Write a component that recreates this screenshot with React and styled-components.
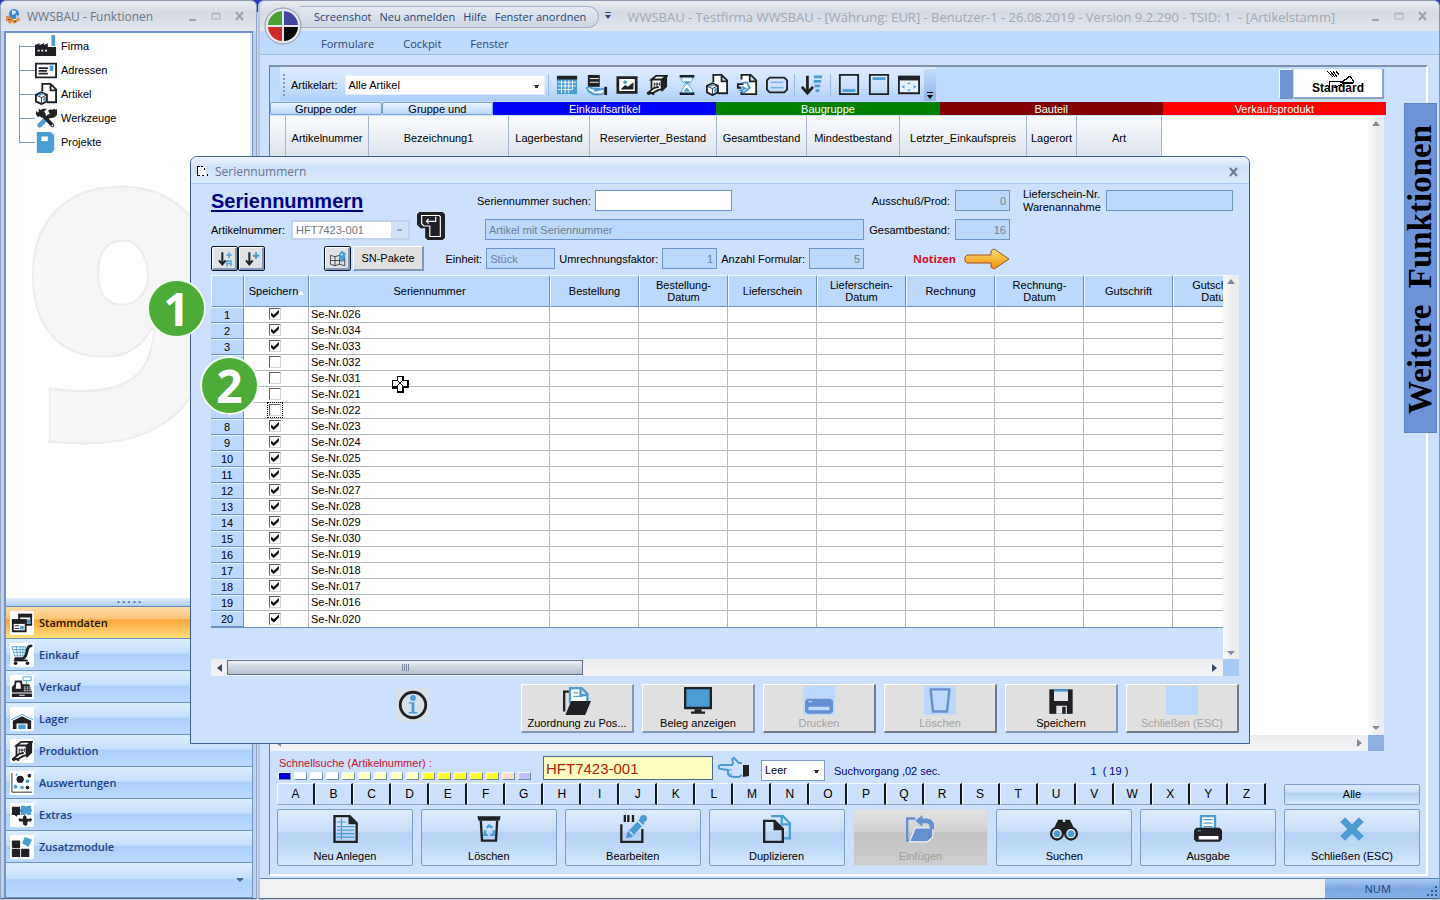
import React from 'react'
import styled, { createGlobalStyle, css } from 'styled-components'

const K = '#1f2124'
const B = '#4b9cd3'
const D = '#6490d0'
const ui = '"Liberation Sans", Arial, sans-serif'
const segoe = '"Open Sans", "Noto Sans", sans-serif'

const GlobalStyle = createGlobalStyle`
    * { box-sizing:border-box; }
    body {
        margin:0;
        background:#cfd3da;
        font-family:${ui};
        font-size:11px;
        line-height:16px;
        color:#000;
        overflow:hidden;
    }
    button, input, select { font:inherit; color:inherit; margin:0; }
    svg { display:block; flex:none; }
`

const shapes = {
    factory: <><path fill={K} d="M0 23V11l5-2v2l5-2v2l4-2v4h9v10z" /><path fill="#fff" d="M3 16h2v2H3zM7 16h2v2H7zM11 16h2v2h-2z" /><path fill={B} d="M18 0h4v12h-4z" /></>,
    card: <><path fill="#fff" stroke={K} strokeWidth="2" d="M1 5h22v15H1z" /><path stroke={K} strokeWidth="2" d="M4 10h10M4 13h9M4 16h10" /><path fill={B} d="M16 7h4v6h-4z" /></>,
    article: <><path fill="#fff" stroke={K} strokeWidth="2" d="M8 9V1h9l6 6v14H13M17 1v7h6" /><path fill="#fff" stroke={K} strokeWidth="2" d="M1 13l6-3 6 3v7l-6 3-6-3z" /><path stroke={K} strokeWidth="1" d="M1 13l6 3 6-3M7 16v7" /><path fill={B} d="M3 13l5-2 2 1-5 2zM9 16l3-1v4l-3 1z" /></>,
    tools: <><path stroke={B} strokeWidth="5" strokeLinecap="round" d="M5 20l6-6" /><path stroke={K} strokeWidth="4" strokeLinecap="round" d="M6 6l13 14" /><path fill={K} d="M1 8l7-6h5l-3 3 2 3-4 4-3-2-2 1zM1 4l3 3V2l5 3-3 5-5-2z" /><path fill="none" stroke={K} strokeWidth="4" d="M22 3l-4 4-2-4M22 3c2 5-2 8-7 7l-3 3" /><circle cx="19" cy="20" r="1" fill="#fff" /></>,
    project: <><path fill={B} d="M2 1h15l4 4v15l-3 4H2z" /><path fill="#fff" d="M7 6h7v5H7z" /><path stroke={B} d="M19 1l4 4M18 23l5-5" strokeDasharray="1 1" /></>,
    windows: <><path fill="#fff" stroke={K} strokeWidth="2" d="M9 3h13v11H9z" /><path fill={K} d="M8 2h15v4H8z" /><path fill={B} d="M15 8h6v5h-6z" /><path fill="#fff" stroke={K} strokeWidth="2" d="M2 9h14v12H2z" /><path fill={K} d="M1 8h16v5H1z" /><path fill={B} d="M10 15h4v4h-4z" /><path stroke={K} d="M4 15h5M4 18h5" /></>,
    cart: <><path fill="#fff" stroke={B} d="M1 3h15l-1 10H4z" /><path stroke={B} d="M2 6h14M3 9h12M6 3l1 10M10 3v10M13 3v10" /><path fill="none" stroke={K} strokeWidth="3" strokeLinecap="round" d="M22 2c-4 0-4 4-5 8-1 4-2 6-5 6H5" /><path stroke={K} strokeWidth="2" d="M3 18h15" /><circle cx="5" cy="21" r="2" fill={K} /><circle cx="18" cy="21" r="2" fill={K} /></>,
    register: <><path fill={K} d="M1 12l3-3h16l3 9H1zM1 19h22v4H1z" /><path fill="#fff" stroke={K} strokeWidth="2" d="M5 6h6l1 9H4z" /><path fill="#fff" stroke={B} strokeWidth="1" d="M13 1h9v4h-9zM17 5v4" /><path stroke="#fff" strokeWidth="1" d="M14 12h7M14 14h8M14 16h8" strokeDasharray="2 1" /><path stroke="#fff" strokeWidth="1" d="M9 21h6" /></>,
    barn: <><path fill="none" stroke={B} strokeWidth="1" d="M0 13l12-6 12 6" /><path fill={K} d="M2 14l10-5 10 5v9h-4v-6H6v6H2z" /><path fill={B} d="M8 18h8v5H8z" /></>,
    machine: <><path fill="#fff" stroke={K} strokeWidth="2" d="M6 6l5-4h12l-6 4zM6 6h11v11H6z" /><path fill={K} d="M17 6l6-4v12l-6 6z" /><path stroke={K} strokeWidth="1" d="M9 9v5M12 9v5M15 9v4M9 11h6" /><path fill="#fff" stroke={K} strokeWidth="2" d="M14 14l-5 1-6 5 4 1 7-4" /><path stroke={K} strokeWidth="2" d="M3 20v3M8 20v3M1 21h8" /></>,
    scatter: <><path fill="none" stroke={K} strokeWidth="1" d="M1 1v21h22" /><circle cx="10" cy="8" r="4" fill={K} /><circle cx="20" cy="4" r="2" fill={K} /><circle cx="18" cy="17" r="2" fill={K} /><circle cx="5" cy="16" r="2" fill={B} /><circle cx="18" cy="10" r="2" fill={B} /><circle cx="12" cy="17" r="2" fill={B} /><circle cx="6" cy="3" r="1" fill={B} /></>,
    puzzle: <><path fill={K} d="M1 3h9v3l2 2-2 1v3H7l-1 2-2-2H1z" /><path fill={B} d="M11 2h4l2 1 1-1h4v3l1 2-1 2v3h-4l-1-2-2 2h-4V9l-2-1 2-2z" /><path fill={K} d="M13 14l2-2 2 2v2h4v-1l2 2-2 3v-1h-3v3l-2 2-3-2v-3h-3v1l-2-3 2-2v1h3z" /></>,
    modules: <><rect x="1" y="5" width="9" height="8" rx="1" fill={K} /><rect x="1" y="14" width="9" height="9" rx="1" fill={K} /><rect x="11" y="14" width="9" height="9" rx="1" fill={K} /><path fill={B} d="M15 1l8 3-4 8-7-4z" /></>,
    calendar: <><path fill={B} d="M1 2h22v20H1z" /><path fill={K} d="M1 2h22v4H1z" /><path stroke="#fff" d="M2 9h20M2 13h20M2 17h16M6 7v14M10 7v14M14 7v14M18 7v10" /></>,
    serve: <><path fill={K} d="M2 1h13v13H2z" /><path stroke="#fff" d="M4 5h10M4 9h10" /><path fill="#fff" stroke={B} strokeWidth="2" d="M1 15c4-2 6 2 9 1h4c1 2-3 2-5 2 4 1 7-2 11-2v5c-6 2-13 2-18-3z" /><path fill={K} d="M20 14h3v9h-3z" /></>,
    picture: <><path fill="#fff" stroke={K} strokeWidth="3" d="M2 4h20v16H2z" /><path fill={K} d="M5 17l5-5 3 2 6-5v8z" /><circle cx="10" cy="9" r="2" fill={B} /></>,
    hourglass: <><path fill={K} d="M4 1h16v3H4zM4 20h16v3H4z" /><path fill="#fff" stroke={B} strokeWidth="1" d="M6 4h12c0 5-4 6-4 8s4 3 4 8H6c0-5 4-6 4-8s-4-3-4-8z" /><path fill={B} d="M8 8h8l-4 4zM8 19l4-4 4 4z" /></>,
    pageTurn: <><path fill="#fff" stroke={K} strokeWidth="2" d="M6 6V1h10l6 6v15H6v-3M15 1v7h7" /><path fill="none" stroke={B} strokeWidth="2" d="M6 10l6-1 3 6-6 5-4-2 5-2-3-2" /><path fill="none" stroke={K} strokeWidth="2" d="M8 11H2v4h4" /></>,
    label: <><path fill="none" stroke={K} strokeWidth="2" d="M4 4h16l3 3v10l-3 3H4l-3-3V7z" /><path stroke={B} strokeWidth="1" d="M5 9h14M5 15h14" /></>,
    sort: <><path fill="none" stroke={K} strokeWidth="3" d="M7 2v18M1 14l6 7 6-7" /><path stroke={B} strokeWidth="3" d="M14 3h9M14 8h8M15 13h6M16 18h4" /></>,
    pageBottom: <><path fill="none" stroke={K} strokeWidth="2" d="M2 1h20v21H2z" /><path stroke={B} strokeWidth="3" d="M5 18h14" /></>,
    pageTop: <><path fill="none" stroke={K} strokeWidth="2" d="M2 1h20v21H2z" /><path stroke={B} strokeWidth="3" d="M5 5h14" /></>,
    expand: <><path fill="#e6f1ff" stroke={K} strokeWidth="2" d="M1 3h22v18H1z" /><path fill={K} d="M1 2h22v5H1z" /><path fill={B} d="M10 11l2-2 2 2zM10 17l2 2 2-2zM7 12l-3 2 3 2zM17 12l3 2-3 2z" /></>,
    list: <><path fill="none" stroke={K} strokeWidth="2" d="M3 1h13l6 6v16H3z" /><path fill={K} d="M15 1l7 7h-7z" /><path stroke={B} d="M5 6h8M5 10h15M5 13h15M5 16h15M5 19h15M9 3v18" /></>,
    recycle: <><path fill={K} d="M2 1h20l-1 4H3z" /><path fill="none" stroke={K} strokeWidth="2" d="M5 5l1 17h12l1-17" /><path fill="none" stroke={B} strokeWidth="2" d="M10 11l2-2 3 2M9 13l-1 4h3M13 17h3v-4" /></>,
    edit: <><path fill="none" stroke={K} strokeWidth="2" d="M2 8v15h18V12" /><path stroke={K} strokeWidth="2" d="M5 0v6M8 0v6M12 0v6" /><path fill={B} d="M7 15L18 3l4 4-11 12-5 1z" /><circle cx="21" cy="3" r="3" fill={B} /><path stroke="#fff" d="M9 14l3 3M16 5l4 4" /></>,
    copy: <><path fill="none" stroke={B} strokeWidth="2" d="M7 1h10l6 6v13h-5M16 2v6h7" /><path fill="none" stroke={K} strokeWidth="2" d="M1 5h9l7 7v11H1z" /><path fill={K} d="M9 5l8 8H9z" /></>,
    paste: <><path fill="none" stroke={D} strokeWidth="2" d="M8 3H1v19h3" /><path fill={D} stroke="#f4f4f4" strokeWidth="1" d="M8 11h15v8l-5 4H3z" /><path fill="none" stroke={D} strokeWidth="4" d="M13 5h4c4 0 6 3 5 7" /><path fill={D} d="M8 5l6-5v10z" /></>,
    binoculars: <><path fill={K} d="M3 12L7 4h4v2h2V4h4l4 8v4H3z" /><circle cx="6" cy="16" r="5" fill="#fff" stroke={K} strokeWidth="2" /><circle cx="18" cy="16" r="5" fill="#fff" stroke={K} strokeWidth="2" /><circle cx="6" cy="16" r="3" fill={B} /><circle cx="18" cy="16" r="3" fill={B} /></>,
    printer: <><path fill="#fff" stroke={B} strokeWidth="2" d="M6 1h12v11H6z" /><path stroke={B} d="M8 4h8M8 7h8M8 10h8" /><path fill={K} d="M2 11h20l2 2v8l-2 2H2l-2-2v-8z" /><path fill="#fff" d="M4 18h17v3H4z" /><path fill={B} d="M3 13h3v1H3z" /></>,
    cross: <path fill={B} d="M6 2l6 6 6-6 4 4-6 6 6 6-4 4-6-6-6 6-4-4 6-6-6-6z" />,
    folderDoc: <><path fill="#fff" stroke={B} strokeWidth="2" d="M6 14V1h10l5 5v8M15 1v6h6" /><path stroke={B} d="M9 5h4M9 8h8" /><path fill="none" stroke={K} strokeWidth="2" d="M5 4H1v17" /><path fill={K} d="M7 12h17l-5 12H2z" /></>,
    monitor: <><path fill={B} stroke={K} strokeWidth="2" d="M1 1h22v17H1z" /><path fill={K} d="M9 19h6v2h3v2H6v-2h3z" /></>,
    printerOff: <><path fill={D} d="M2 10h20l2 2v9l-2 2H2l-2-2v-9z" /><path fill="#bcd8fd" d="M3 17h18v3H3zM3 12h3v1H3z" /></>,
    binOff: <path fill="none" stroke={D} strokeWidth="2" d="M3 2h18M4 3l2 18h12l2-18" />,
    save: <><path fill={K} d="M2 2h20v21H2z" /><path fill="#e4e6ea" d="M6 3h12v9H6zM8 16h9v7H8z" /><path fill={B} d="M6 2h12v2H6z" /><path fill={K} d="M13 17h3v6h-3z" /></>,
    blank: <path fill="#bcd8fd" d="M0 0h24v24H0z" />,
    info: <><circle cx="12" cy="12" r="9" fill="none" stroke={K} strokeWidth="2" /><circle cx="12" cy="7" r="2" fill={B} /><path fill={B} d="M9 10h4v7h2v1H9v-1h2v-6H9z" /></>,
    sortA: <><path fill="none" stroke={K} strokeWidth="3" d="M8 2v17M3 14l5 6 5-6" /><path fill="none" stroke={B} strokeWidth="2" d="M18 2v9M14 6h8M15 23v-8h6v8M15 19h6" /></>,
    sortPlus: <><path fill="none" stroke={K} strokeWidth="3" d="M8 2v17M3 14l5 6 5-6" /><path stroke={B} strokeWidth="3" d="M18 2v10M13 7h10" /></>,
    map: <><path fill="none" stroke={K} strokeWidth="1" d="M2 7l6 2 6-2 7 2v12l-7-2-6 2-6-2zM8 9v12M14 7v12M2 14h19" /><path fill={B} d="M17 1l5 3-1 7-4 6-4-6 1-7z" /><path fill="#fff" d="M16 5h2v2h-2z" /></>,
    key: <><path fill={K} d="M2 0h20l2 2v20l-2 2H9l-2-2v-8H3l-3-3V2z" /><path fill="none" stroke="#fff" d="M4 3h15l1 1v17h-9v-9H6l-2-2zM16 4v4H8M10 6L8 8l2 2" /></>,
}

const Icon = ({ name, size = 22 }) => (
    <svg width={size} height={size} viewBox="0 0 24 24" fill="none" aria-hidden="true">{shapes[name]}</svg>
)

const tree = [['factory', 'Firma'], ['card', 'Adressen'], ['article', 'Artikel'], ['tools', 'Werkzeuge'], ['project', 'Projekte']]
const nav = [['windows', 'Stammdaten'], ['cart', 'Einkauf'], ['register', 'Verkauf'], ['barn', 'Lager'], ['machine', 'Produktion'], ['scatter', 'Auswertungen'], ['puzzle', 'Extras'], ['modules', 'Zusatzmodule']]
const tools1 = ['calendar', 'serve', 'picture', 'machine', 'hourglass', 'article', 'pageTurn', 'label']
const tools2 = ['pageBottom', 'pageTop', 'expand']
const mainCols = [[16, ''], [83, 'Artikelnummer'], [140, 'Bezeichnung1'], [81, 'Lagerbestand'], [127, 'Reservierter_Bestand'], [90, 'Gesamtbestand'], [93, 'Mindestbestand'], [127, 'Letzter_Einkaufspreis'], [50, 'Lagerort'], [85, 'Art']]
const swatches = ['#0000d8', '#fff', '#fff', '#fff', '#ffffc8', '#ffffc8', '#ffffc8', '#ffffc8', '#ffffc8', '#ffff20', '#ffff20', '#ffff20', '#ffff20', '#ffff20', '#ffdcc8', '#c0c0ff']
const actions = [['list', 'Neu Anlegen'], ['recycle', 'Löschen'], ['edit', 'Bearbeiten'], ['copy', 'Duplizieren'], ['paste', 'Einfügen', true], ['binoculars', 'Suchen'], ['printer', 'Ausgabe'], ['cross', 'Schließen (ESC)']]
const serialCols = [[33, ''], [65, 'Speichern'], [241, 'Seriennummer'], [89, 'Bestellung'], [89, 'Bestellung-\nDatum'], [89, 'Lieferschein'], [89, 'Lieferschein-\nDatum'], [89, 'Rechnung'], [89, 'Rechnung-\nDatum'], [89, 'Gutschrift'], [89, 'Gutschrift-\nDatum']]
const serials = ['026', '034', '033', '032', '031', '021', '022', '023', '024', '025', '035', '027', '028', '029', '030', '019', '018', '017', '016', '020']
const unchecked = ['032', '031', '021', '022']
const dialogActions = [['folderDoc', 'Zuordnung zu Pos...'], ['monitor', 'Beleg anzeigen'], ['printerOff', 'Drucken', true], ['binOff', 'Löschen', true], ['save', 'Speichern'], ['blank', 'Schließen (ESC)', true]]

function WindowControls() {
    return (
        <Controls>
            <ControlButton aria-label="Minimieren"><svg width="12" height="12"><path stroke="#98a3b4" strokeWidth="2" d="M3 10h7" /></svg></ControlButton>
            <ControlButton aria-label="Maximieren"><svg width="12" height="12"><path fill="none" stroke="#a9b2c0" d="M2 3h8v6H2zM2 4h8" /></svg></ControlButton>
            <ControlButton aria-label="Schließen"><svg width="12" height="12"><path stroke="#98a3b4" strokeWidth="2" d="M2 2l7 8M9 2L2 10" /></svg></ControlButton>
        </Controls>
    )
}

function FunctionsWindow() {
    return (
        <SideWindow>
            <TitleBar>
                <svg width="16" height="16" viewBox="0 0 16 16">
                    <circle cx="9" cy="6" r="5" fill="#3f87cd" />
                    <path fill="#d9ecfb" d="M7 2l4 1-1 3-3 1zM11 7l2 1-2 2z" />
                    <path fill="#e0903c" d="M1 8h4v2h3v2h4v2l-3 2-2-2-2 2-3-3H1zM11 11l4-1v2l-3 2z" />
                    <path fill="#7a4a20" d="M3 11h3v1H3zM9 13h2v1H9z" />
                </svg>
                <SideTitle>WWSBAU - Funktionen</SideTitle>
                <WindowControls />
            </TitleBar>
            <SideBody>
                <TreePanel>
                    <Watermark aria-hidden="true">9</Watermark>
                    <Tree>
                        {tree.map(([icon, label]) => (
                            <TreeItem key={label}><Icon name={icon} />{label}</TreeItem>
                        ))}
                    </Tree>
                </TreePanel>
                <Grip>·····</Grip>
                {nav.map(([icon, label], i) => (
                    <NavButton key={label} $active={i === 0}>
                        <NavIcon><Icon name={icon} /></NavIcon>{label}
                    </NavButton>
                ))}
                <NavFooter><Arrow $dir="down" $color="#4a6a9c" /></NavFooter>
            </SideBody>
        </SideWindow>
    )
}

function MainWindow() {
    return (
        <Main>
            <MainTitleBar>
                <QuickMenu>
                    {['Screenshot', 'Neu anmelden', 'Hilfe', 'Fenster anordnen'].map(t => <MenuLink href="#" key={t}>{t}</MenuLink>)}
                </QuickMenu>
                <More aria-label="Mehr"><svg width="8" height="8"><path fill="#2b4a80" d="M1 0h6v1H1zM1 3h6L4 7z" /></svg></More>
                <MainTitle>WWSBAU - Testfirma WWSBAU - [Währung: EUR] - Benutzer-1 - 26.08.2019 - Version 9.2.290 - TSID: 1  - [Artikelstamm]</MainTitle>
                <WindowControls />
                <Orb>
                    <svg width="38" height="38" viewBox="0 0 38 38">
                        <circle cx="19" cy="19" r="18" fill="#e4e7ec" stroke="#8d97a8" />
                        <path fill="#45a035" d="M18 18H4A15 15 0 0 1 18 4z" />
                        <path fill="#44459c" d="M20 18V4a15 15 0 0 1 14 14z" />
                        <path fill="#cc2a2a" d="M18 20v14A15 15 0 0 1 4 20z" />
                        <path fill="#080808" d="M20 20h14a15 15 0 0 1-14 14z" />
                    </svg>
                </Orb>
            </MainTitleBar>
            <MenuBar>
                {['Formulare', 'Cockpit', 'Fenster'].map(t => <MenuLink href="#" key={t}>{t}</MenuLink>)}
            </MenuBar>
            <Panel>
                <ToolRow>
                    <Toolbar>
                        <ToolGrip />
                        <label htmlFor="art">Artikelart:</label>
                        <ArtSelect id="art"><option>Alle Artikel</option></ArtSelect>
                        <Separator $w={7} />
                        {tools1.map(n => <ToolButton key={n} aria-label={n}><Icon name={n} /></ToolButton>)}
                        <Separator $w={5} />
                        <ToolButton aria-label="sort"><Icon name="sort" /></ToolButton>
                        <Separator $w={7} />
                        {tools2.map(n => <ToolButton key={n} aria-label={n}><Icon name={n} /></ToolButton>)}
                        <ToolMore aria-label="Mehr"><svg width="8" height="8"><path fill="#000" d="M1 0h6v1H1zM1 3h6L4 7z" /></svg></ToolMore>
                    </Toolbar>
                    <StandardGroup>
                        <BlueTab aria-label="Ansicht" />
                        <StandardButton>
                            <StandardPen width="30" height="20" viewBox="0 0 30 20" shapeRendering="crispEdges">
                                <path fill="none" stroke="#000" d="M3 0l6 6M6 0l5 6M9 0l4 6M12 0l3 4M5 17v-7h15M20 10l6-5 4 6H18l8-6M10 17l10-5h9" />
                            </StandardPen>
                            Standard
                        </StandardButton>
                    </StandardGroup>
                </ToolRow>
                <Legend>
                    <LegendButton>Gruppe oder</LegendButton>
                    <LegendButton>Gruppe und</LegendButton>
                    <LegendItem $bg="#0000ff">Einkaufsartikel</LegendItem>
                    <LegendItem $bg="#008000">Baugruppe</LegendItem>
                    <LegendItem $bg="#800000">Bauteil</LegendItem>
                    <LegendItem $bg="#ff0000">Verkaufsprodukt</LegendItem>
                </Legend>
                <GridArea>
                    <GridView>
                        <MainTable>
                            <colgroup>{mainCols.map(([w], i) => <Col key={i} $w={w} />)}</colgroup>
                            <thead><tr>{mainCols.map(([, t], i) => <th key={i}>{t}</th>)}</tr></thead>
                        </MainTable>
                    </GridView>
                    <VScroll><Arrow $dir="up" /><Arrow $dir="down" /></VScroll>
                    <HScroll><Arrow $dir="left" /><Arrow $dir="right" /></HScroll>
                    <Corner $bg="#8eade0" />
                </GridArea>
                <Bottom>
                    <SearchRow>
                        <QuickSearch>
                            <label htmlFor="quick">Schnellsuche (Artikelnummer) :</label>
                            <Swatches>{swatches.map((c, i) => <Swatch key={i} $bg={c} aria-label={`Farbe ${i + 1}`} />)}</Swatches>
                        </QuickSearch>
                        <QuickInput id="quick" defaultValue="HFT7423-001" />
                        <svg width="34" height="24" viewBox="0 0 34 24">
                            <path fill="none" stroke={B} strokeWidth="2" strokeLinejoin="round" d="M25 7h-3l-5-5c-2 0-2 1-1 5l-1 2H4c-3 0-3 4 0 4l7 1v4l2 2 4 1h5l3-2" />
                            <path stroke={B} d="M11 14h4M12 18h3" />
                            <path fill={K} d="M26 9h6v11l-6 1z" />
                        </svg>
                        <EmptySelect aria-label="Filter"><option>Leer</option></EmptySelect>
                        <NavyText>Suchvorgang ,02 sec.</NavyText>
                        <Count>1  ( 19 )</Count>
                    </SearchRow>
                    <LetterRow>
                        <Letters>{'ABCDEFGHIJKLMNOPQRSTUVWXYZ'.split('').map(l => <Letter key={l}>{l}</Letter>)}</Letters>
                        <AllButton>Alle</AllButton>
                    </LetterRow>
                    <Actions>
                        {actions.map(([icon, label, off]) => (
                            <ActionButton key={label} disabled={off}><Icon name={icon} size={28} />{label}</ActionButton>
                        ))}
                    </Actions>
                </Bottom>
            </Panel>
            <StatusBar><StatusKeys><Dim>UF</Dim>NUM<Dim>RF</Dim>
                <svg width="10" height="10"><path stroke="#34588f" strokeWidth="2" strokeDasharray="2 2" d="M8 1h2M4 5h6M0 9h10" /></svg>
            </StatusKeys></StatusBar>
            <SideTab>Weitere  Funktionen</SideTab>
        </Main>
    )
}

function SerialDialog() {
    return (
        <Dialog role="dialog" aria-label="Seriennummern">
            <DialogTitle>
                <svg width="14" height="14" viewBox="0 0 14 14" shapeRendering="crispEdges"><path fill="#fff" d="M2 2h8v9H2z" /><path fill="#000" d="M1 1h3v1H2v8h2v1H1zM5 1h2v1H5zM8 3h1v2H8zM6 10h2v1H6zM11 9h1v2h-1z" /></svg>
                <span>Seriennummern</span>
                <ControlButton aria-label="Schließen"><svg width="12" height="12"><path stroke="#6f7c90" strokeWidth="2" d="M2 2l7 8M9 2L2 10" /></svg></ControlButton>
            </DialogTitle>
            <DialogBody>
                <FormRow>
                    <h1>Seriennummern</h1>
                    <MidCell $indent><label htmlFor="search">Seriennummer suchen:</label><Field id="search" $w={137} /></MidCell>
                    <RightCell><label htmlFor="aus">Ausschuß/Prod:</label><Field id="aus" $w={55} disabled $num defaultValue="0" /></RightCell>
                    <FarCell><NoteLabel htmlFor="lief">Lieferschein-Nr.<br />Warenannahme</NoteLabel><Field id="lief" $w={127} disabled /></FarCell>
                </FormRow>
                <FormRow>
                    <LeftCell>
                        <ArticleLabel htmlFor="artnr">Artikelnummer:</ArticleLabel>
                        <Combo id="artnr" disabled><option>HFT7423-001</option></Combo>
                        <KeyButton aria-label="Übernehmen"><Icon name="key" size={28} /></KeyButton>
                    </LeftCell>
                    <MidCell><Field aria-label="Artikeltext" $w={379} disabled defaultValue="Artikel mit Seriennummer" /></MidCell>
                    <RightCell><label htmlFor="ges">Gesamtbestand:</label><Field id="ges" $w={55} disabled $num defaultValue="16" /></RightCell>
                </FormRow>
                <FormRow>
                    <LeftCell>
                        <SmallButton aria-label="Sortieren A"><Icon name="sortA" size={16} /></SmallButton>
                        <SmallButton aria-label="Sortieren"><Icon name="sortPlus" size={16} /></SmallButton>
                        <Spring />
                        <SmallButton aria-label="Karte"><Icon name="map" size={18} /></SmallButton>
                        <PacketButton>SN-Pakete</PacketButton>
                    </LeftCell>
                    <MidCell>
                        <label htmlFor="einh">Einheit:</label><Field id="einh" $w={69} disabled defaultValue="Stück" />
                        <label htmlFor="umr">Umrechnungsfaktor:</label><Field id="umr" $w={55} disabled $num defaultValue="1" />
                        <label htmlFor="anz">Anzahl Formular:</label><Field id="anz" $w={55} disabled $num defaultValue="5" />
                    </MidCell>
                    <RightCell>
                        <Notes>Notizen</Notes>
                        <svg width="46" height="22" viewBox="0 0 46 22">
                            <defs><linearGradient id="gold" x1="0" y1="0" x2="0" y2="1"><stop offset="0" stopColor="#ffe27a" /><stop offset="1" stopColor="#f08c00" /></linearGradient></defs>
                            <path fill="url(#gold)" stroke="#a8501c" d="M3 7h24V3l3-2 15 10-15 10-3-2v-4H3l-2-2V9z" />
                        </svg>
                    </RightCell>
                </FormRow>
                <TableArea>
                    <TableClip>
                        <SerialTable>
                            <colgroup>{serialCols.map(([w], i) => <Col key={i} $w={w} />)}</colgroup>
                            <thead><tr>{serialCols.map(([, t], i) => <th key={i}>{t}{i === 1 && <SortMark />}</th>)}</tr></thead>
                            <tbody>
                                {serials.map((s, i) => (
                                    <tr key={s}>
                                        <th scope="row">{i + 1}</th>
                                        <td><CheckCell><Check type="checkbox" aria-label={`Speichern Se-Nr.${s}`} defaultChecked={!unchecked.includes(s)} $focus={s === '022'} /></CheckCell></td>
                                        <td>Se-Nr.{s}</td>
                                        {serialCols.slice(3).map((c, j) => <td key={j} />)}
                                    </tr>
                                ))}
                            </tbody>
                        </SerialTable>
                    </TableClip>
                    <VScroll><Arrow $dir="up" /><Arrow $dir="down" /></VScroll>
                    <HScroll><Arrow $dir="left" $color="#3c4a66" /><Thumb><ThumbGrip /></Thumb><Spring /><Arrow $dir="right" $color="#3c4a66" /></HScroll>
                    <Corner $bg="#a9caf6" />
                </TableArea>
                <DialogFooter>
                    <InfoButton aria-label="Info"><Icon name="info" size={34} /></InfoButton>
                    {dialogActions.map(([icon, label, off]) => (
                        <DialogButton key={label} disabled={off}><DialogIcon $off={off}><Icon name={icon} size={28} /></DialogIcon>{label}</DialogButton>
                    ))}
                </DialogFooter>
            </DialogBody>
        </Dialog>
    )
}

export default function App() {
    return (
        <>
            <GlobalStyle />
            <Desktop>
                <FunctionsWindow />
                <MainWindow />
                <SerialDialog />
                <Badge $x={147} $y={279}>1</Badge>
                <Badge $x={200} $y={356}>2</Badge>
                <Cursor width="17" height="17" viewBox="0 0 17 17" shapeRendering="crispEdges">
                    <path fill="#000" d="M5 0h7v4h5v8h-5v5H5v-4H0V4h5z" />
                    <path fill="#fff" d="M6 1h4v4h5v5h-5v5H6v-5H1V5h5z" />
                    <path stroke="#000" d="M6 5l5 5M10 5l-5 5" />
                </Cursor>
            </Desktop>
        </>
    )
}

const Desktop = styled.div`
    position:relative;
    display:flex;
    height:100vh;
    padding-bottom:1px;
    background:linear-gradient(#2a35b8, #2a35b8) top / 100% 12px no-repeat, #d3d6db;
`
const windowFrame = css`
    display:flex;
    flex-direction:column;
    border-top:1px solid #8d9ab0;
    border-bottom:1px solid #4a648f;
    border-radius:6px 6px 0 0;
`
const SideWindow = styled.section`
    ${windowFrame}
    width:257px;
    flex:none;
    background:#c3d1e8;
    border-right:1px solid #94a5c2;
    border-left:1px solid #94a5c2;
`
const TitleBar = styled.header`
    display:flex;
    align-items:center;
    height:30px;
    padding:0 4px;
    gap:6px;
    border-radius:6px 6px 0 0;
    background:linear-gradient(#e9ecf1, #d5dae3 40%, #e2e6ed);
    font-family:${segoe};
    color:#6d7684;
    white-space:pre;
`
const SideTitle = styled.span`
    flex:1;
    padding-top:2px;
    font-size:12px;
`
const Controls = styled.div`
    display:flex;
    gap:4px;
    margin-left:auto;
    padding:0 2px;
`
const ControlButton = styled.button`
    display:flex;
    align-items:center;
    justify-content:center;
    width:20px;
    height:20px;
    padding:0;
    border:0;
    background:none;
`
const SideBody = styled.div`
    flex:1;
    display:flex;
    flex-direction:column;
    margin:0 3px 0 3px;
    border:1px solid #6f94cb;
    border-left-width:2px;
    border-top-width:2px;
    background:#b9d6fb;
`
const TreePanel = styled.div`
    position:relative;
    flex:1;
    overflow:hidden;
    background:#fff;
    border-right:2px solid #dfeafa;
`
const Watermark = styled.div`
    position:absolute;
    left:16px;
    top:97px;
    font:800 350px/350px ${segoe};
    color:#f6f6f6;
    -webkit-text-stroke:2px #ededed;
`
const Tree = styled.ul`
    position:relative;
    margin:0;
    padding:1px 0 0 13px;
    list-style:none;
`
const TreeItem = styled.li`
    position:relative;
    display:flex;
    align-items:center;
    gap:4px;
    height:24px;
    padding-left:16px;
    &::before {
        content:'';
        position:absolute;
        left:0;
        top:-12px;
        width:15px;
        height:24px;
        border-left:1px solid #7f9cc0;
        border-bottom:1px solid #7f9cc0;
    }
    &:first-child::before {
        top:11px;
        height:1px;
    }
`
const Grip = styled.div`
    height:9px;
    border-bottom:1px solid #5f86bd;
    background:linear-gradient(#e3effe, #aecbf2);
    text-align:center;
    font-size:16px;
    line-height:8px;
    color:#3c5f99;
`
const NavButton = styled.button`
    display:flex;
    align-items:center;
    gap:5px;
    height:32px;
    padding:0 4px;
    border:0;
    border-bottom:1px solid #6b92c8;
    background:${p => p.$active
        ? 'linear-gradient(#fddcab, #fdc576 38%, #fba53a 42%, #fdb650 60%, #ffe07a)'
        : 'linear-gradient(#deedff, #c5dffe 45%, #acd0fb 50%, #bbdafd)'};
    font:600 11px/16px ${segoe};
    color:${p => p.$active ? '#1c1408' : '#1d4485'};
`
const NavIcon = styled.span`
    padding:1px;
    background:#fff;
`
const NavFooter = styled.div`
    display:flex;
    justify-content:flex-end;
    height:34px;
    padding:15px 8px;
    background:linear-gradient(#deedff, #c5dffe 45%, #acd0fb 50%, #bbdafd);
`
const Arrow = styled.i`
    flex:none;
    width:0;
    height:0;
    border:4px solid transparent;
    ${p => p.$dir === 'up' && css`border-bottom:5px solid ${p.$color || '#8089a0'}; border-top:0;`}
    ${p => p.$dir === 'down' && css`border-top:4px solid ${p.$color || '#8089a0'}; border-bottom:0;`}
    ${p => p.$dir === 'left' && css`border-right:5px solid ${p.$color || '#8089a0'}; border-left:0;`}
    ${p => p.$dir === 'right' && css`border-left:5px solid ${p.$color || '#8089a0'}; border-right:0;`}
`

const Main = styled.main`
    ${windowFrame}
    position:relative;
    flex:1;
    min-width:0;
    margin-left:1px;
    border-left:2px solid #b4c6e2;
    border-right:1px solid #7f97bd;
    background:#cde1fe;
`
const MainTitleBar = styled(TitleBar)`
    position:relative;
    gap:0;
    padding-left:40px;
`
const QuickMenu = styled.nav`
    display:flex;
    align-items:center;
    gap:8px;
    height:22px;
    margin-top:2px;
    padding:0 12px 0 14px;
    border:1px solid #a9b4c6;
    border-left:0;
    border-radius:0 11px 11px 0;
    background:linear-gradient(#e6eaf1, #cdd5e2);
`
const MenuLink = styled.a`
    font-family:${segoe};
    font-size:11px;
    color:#274879;
    text-decoration:none;
    white-space:nowrap;
`
const More = styled.button`
    padding:0 5px;
    border:0;
    background:none;
`
const MainTitle = styled.span`
    padding:2px 0 0 10px;
    font-size:13px;
    color:#a3a9b2;
    overflow:hidden;
`
const Orb = styled.div`
    position:absolute;
    left:4px;
    top:6px;
    z-index:1;
`
const MenuBar = styled.nav`
    display:flex;
    align-items:center;
    gap:29px;
    height:24px;
    padding:2px 0 0 61px;
    background:#bedaff;
    border-bottom:1px solid #9fbde6;
`
const Panel = styled.div`
    flex:1;
    display:flex;
    flex-direction:column;
    margin:10px 11px 2px 9px;
    border:2px solid #fff;
    border-top-color:#8191a9;
    border-left:1px solid #6d7b90;
`
const ToolRow = styled.div`
    display:flex;
    justify-content:space-between;
    height:35px;
    padding-left:10px;
    margin-right:41px;
    background:#bfdbff;
`
const Toolbar = styled.div`
    display:flex;
    align-items:center;
    height:34px;
    padding-top:2px;
    border-radius:2px;
    background:linear-gradient(#dcebff, #cfe3ff 50%, #abcdf8);
`
const ToolGrip = styled.i`
    width:2px;
    height:22px;
    margin:0 6px 0 3px;
    background:repeating-linear-gradient(#7c9bc8 0 2px, transparent 2px 4px);
`
const selectArrow = css`
    appearance:none;
    background:linear-gradient(#333, #333) right 5px center / 5px 1px no-repeat,
        linear-gradient(#333, #333) right 6px top 10px / 3px 2px no-repeat, #fff;
`
const ArtSelect = styled.select`
    ${selectArrow}
    width:200px;
    height:20px;
    margin-left:8px;
    padding:0 2px;
    border:1px solid #e4effd;
    border-radius:0;
`
const Separator = styled.i`
    width:${p => p.$w}px;
    height:22px;
    background:linear-gradient(#9dbbe6, #9dbbe6) center / 1px 100% no-repeat;
`
const ToolButton = styled.button`
    display:flex;
    justify-content:center;
    width:30px;
    padding:0;
    border:0;
    background:none;
`
const ToolMore = styled.button`
    align-self:stretch;
    display:flex;
    align-items:flex-end;
    padding:0 2px 1px;
    border:0;
    background:linear-gradient(#c6dcfb, #8fb3e6);
`
const StandardGroup = styled.div`
    display:flex;
    gap:1px;
    padding:2px 1px 3px 0;
`
const BlueTab = styled.button`
    width:14px;
    border:1px solid #f4f9ff;
    border-right-color:#7f93b4;
    border-bottom-color:#7f93b4;
    background:#6e93d6;
`
const StandardButton = styled.button`
    position:relative;
    width:90px;
    padding:10px 0 0;
    border:0;
    border-right:2px solid #8ea2c4;
    border-bottom:2px solid #8ea2c4;
    background:#fff;
    font:bold 12px/16px "Liberation Sans", sans-serif;
`
const StandardPen = styled.svg`
    position:absolute;
    left:30px;
    top:2px;
`
const Legend = styled.div`
    display:grid;
    grid-template-columns:1fr 1fr 2fr 2fr 2fr 2fr;
    height:14px;
    margin-right:40px;
`
const LegendItem = styled.div`
    height:13px;
    background:${p => p.$bg};
    color:#fff;
    text-align:center;
    line-height:14px;
`
const LegendButton = styled.button`
    height:13px;
    padding:0;
    border:1px solid #7da2da;
    border-radius:2px;
    background:linear-gradient(#e8f2ff, #bdd8fb);
    line-height:12px;
`
const GridArea = styled.div`
    flex:1;
    display:grid;
    grid-template:minmax(0, 1fr) 16px / minmax(0, 1fr) 16px;
    margin-right:42px;
`
const GridView = styled.div`
    overflow:hidden;
    background:#fff;
`
const Col = styled.col`
    width:${p => p.$w}px;
`
const MainTable = styled.table`
    table-layout:fixed;
    width:892px;
    border-collapse:separate;
    border-spacing:0;
    th {
        height:44px;
        padding:0;
        border-right:1px solid #a6b6cc;
        background:linear-gradient(#fafbfd, #dbe2ec);
        font-weight:normal;
    }
`
const VScroll = styled.div`
    display:flex;
    flex-direction:column;
    align-items:center;
    justify-content:space-between;
    padding:5px 0;
    background:linear-gradient(90deg, #fafafa, #ececee 60%);
`
const HScroll = styled.div`
    display:flex;
    align-items:center;
    justify-content:space-between;
    padding:0 6px;
    background:linear-gradient(#ededf0, #f4f4f6);
`
const Corner = styled.div`
    background:${p => p.$bg};
`
const Bottom = styled.div`
    padding:0 6px 8px 7px;
`
const SearchRow = styled.div`
    display:flex;
    align-items:center;
    height:32px;
    padding-top:2px;
`
const QuickSearch = styled.div`
    width:266px;
    color:#c8102e;
    label { display:block; padding-left:2px; line-height:15px; }
`
const Swatches = styled.div`
    display:flex;
    gap:3px;
    padding:1px 1px 0;
`
const Swatch = styled.button`
    width:13px;
    height:8px;
    padding:0;
    border:1px solid #f4f8ff;
    border-right-color:#7288aa;
    border-bottom-color:#7288aa;
    background:${p => p.$bg};
`
const QuickInput = styled.input`
    width:170px;
    height:24px;
    margin-right:4px;
    padding:0 2px;
    border:1px solid #4d6a93;
    background:#ffffc2;
    color:#b3200e;
    font:15px "Liberation Sans", sans-serif;
`
const EmptySelect = styled.select`
    ${selectArrow}
    width:64px;
    height:21px;
    margin:4px 9px 0 10px;
    padding:0 3px;
    border:1px solid #7b9ccb;
    border-radius:0;
`
const NavyText = styled.span`
    padding-top:6px;
    color:#000090;
    white-space:pre;
`
const Count = styled(NavyText)`
    margin-left:150px;
`
const LetterRow = styled.div`
    display:flex;
    align-items:center;
    gap:18px;
    margin-bottom:4px;
`
const Letters = styled.div`
    flex:1;
    display:flex;
`
const Letter = styled.button`
    flex:1;
    height:22px;
    padding:0;
    border:1px solid #f5faff;
    border-right:2px solid #101822;
    border-bottom-color:#8aa4c8;
    background:#cde1fe;
    font-size:12px;
`
const glass = css`
    border:1px solid #7c9ccc;
    border-radius:2px;
    background:linear-gradient(#dfecfd, #cadefa 38%, #b6d0f3 42%, #c3dcfb 75%, #d6e9ff);
`
const AllButton = styled.button`
    ${glass}
    width:136px;
    height:21px;
    padding:0;
`
const Actions = styled.div`
    display:grid;
    grid-template-columns:repeat(8, 1fr);
    gap:8px;
`
const ActionButton = styled.button`
    ${glass}
    display:flex;
    flex-direction:column;
    align-items:center;
    gap:5px;
    height:57px;
    padding:5px 0 0;
    &:disabled {
        border-color:#d2dae6;
        background:linear-gradient(#e2e2e2, #d2d2d2 38%, #c3c3c3 42%, #cdcdcd);
        color:#a0a0a0;
    }
`
const StatusBar = styled.footer`
    display:flex;
    justify-content:flex-end;
    height:20px;
    border-top:1px solid #5b86c0;
    background:#f0f0f0;
`
const StatusKeys = styled.div`
    display:flex;
    align-items:center;
    justify-content:space-between;
    width:114px;
    padding:0 0 0 14px;
    background:linear-gradient(#a9cbf7, #7ba7e2 50%, #86b2ec);
    font:11px/16px ${segoe};
    color:#1e3f78;
    svg { align-self:flex-end; margin:0 2px 2px 0; }
`
const Dim = styled.span`
    color:#8aa6cf;
`
const SideTab = styled.button`
    position:absolute;
    right:2px;
    top:102px;
    width:33px;
    height:330px;
    padding:0 0 3px;
    border:1px solid #5c81c4;
    background:#6c92d8;
    writing-mode:vertical-rl;
    transform:rotate(180deg);
    font:bold 33px/31px "Liberation Serif", serif;
    white-space:pre;
`

const Dialog = styled.section`
    position:absolute;
    left:190px;
    right:190px;
    top:156px;
    border:1px solid #3f5f92;
    border-radius:7px 7px 0 0;
    background:#cde1fe;
    overflow:hidden;
`
const DialogTitle = styled.header`
    display:flex;
    align-items:center;
    gap:5px;
    height:27px;
    padding:4px 5px 0;
    background:linear-gradient(#eef5fe, #cfe0f8 40%, #dceafd);
    border-bottom:1px solid #a8c6ef;
    font:12px/16px ${segoe};
    color:#66758c;
    span { flex:1; }
`
const DialogBody = styled.div`
    padding:2px 10px 10px 20px;
    h1 {
        margin:0;
        font:bold 20px/22px "Liberation Sans", sans-serif;
        color:#000080;
        text-decoration:underline;
        text-decoration-thickness:2px;
        text-underline-offset:2px;
    }
`
const FormRow = styled.div`
    display:grid;
    grid-template-columns:232px 421px 146px 1fr;
    align-items:center;
    height:29px;
    label { white-space:nowrap; }
`
const LeftCell = styled.div`
    display:flex;
    align-items:center;
    padding-right:19px;
    > * { flex-shrink:0; }
`
const MidCell = styled.div`
    display:flex;
    align-items:center;
    justify-content:${p => p.$indent ? 'flex-start' : 'flex-end'};
    gap:4px;
    padding-left:${p => p.$indent ? 34 : 0}px;
`
const RightCell = styled.div`
    display:flex;
    align-items:center;
    justify-content:flex-end;
    gap:5px;
`
const FarCell = styled.div`
    display:flex;
    align-items:center;
    gap:5px;
    padding-left:13px;
`
const NoteLabel = styled.label`
    width:78px;
    line-height:13px;
`
const Field = styled.input`
    width:${p => p.$w}px;
    height:21px;
    padding:0 3px;
    border:1px solid #6c95cb;
    background:#fff;
    text-align:${p => p.$num ? 'right' : 'left'};
    &:disabled {
        background:#bcd8fd;
        color:#6d7f98;
    }
`
const ArticleLabel = styled.label`
    width:80px;
`
const Combo = styled.select`
    appearance:none;
    width:119px;
    height:20px;
    padding:0 3px;
    border:2px solid #c2d2ea;
    border-radius:0;
    background:linear-gradient(#9aa9bf, #9aa9bf) right 6px center / 5px 2px no-repeat,
        linear-gradient(90deg, #fff 98px, #cfe0f8 98px);
    &:disabled { color:#72777f; opacity:1; }
`
const KeyButton = styled.button`
    margin:-8px 0 0 7px;
    padding:0;
    border:0;
    background:none;
`
const SmallButton = styled.button`
    display:flex;
    align-items:center;
    justify-content:center;
    width:27px;
    height:25px;
    padding:0;
    border:1px solid #0c1626;
    border-radius:2px;
    background:#dfe1e5;
    box-shadow:inset 1px 1px #fff, inset -2px -2px #8098c0;
`
const Spring = styled.i`
    flex:1;
`
const bevel = css`
    border:1px solid #fff;
    border-right:2px solid #8297b8;
    border-bottom:2px solid #8297b8;
    background:#e0e0e0;
`
const PacketButton = styled.button`
    ${bevel}
    width:71px;
    height:25px;
    margin-left:2px;
    padding:0;
`
const Notes = styled.b`
    margin-right:3px;
    font:bold 11px/16px "Open Sans", sans-serif;
    color:#d0101c;
`
const TableArea = styled.div`
    display:grid;
    grid-template:384px 17px / minmax(0, 1fr) 16px;
    margin-top:2px;
    ${VScroll} { padding:4px 0; }
`
const TableClip = styled.div`
    overflow:hidden;
`
const SerialTable = styled.table`
    table-layout:fixed;
    width:1051px;
    border-collapse:separate;
    border-spacing:0;
    border-bottom:1px solid #6c8fc4;
    th, td {
        height:16px;
        padding:0;
        border-right:1px solid #b4b8be;
        border-bottom:1px solid #b4b8be;
        background:#fff;
        font-weight:normal;
        line-height:15px;
        white-space:pre;
    }
    td { padding-left:2px; }
    tr:last-child > * { border-bottom:0; }
    th[scope] {
        border-top:1px solid #e6f1ff;
        border-right:1px solid #6c8fc4;
        border-bottom:1px solid #6c8fc4;
        background:#bcd8fd;
        line-height:14px;
    }
    thead th {
        height:32px;
        border:0;
        border-top:1px solid #f0f7ff;
        border-left:1px solid #f0f7ff;
        border-right:1px solid #6c8fc4;
        background:#bcd8fd;
        line-height:12px;
    }
    thead tr:last-child > th { border-bottom:1px solid #6c8fc4; }
`
const SortMark = styled.i`
    display:inline-block;
    border:3px solid transparent;
    border-top:0;
    border-bottom:4px solid #fff;
`
const CheckCell = styled.span`
    display:flex;
    justify-content:center;
    padding:0 4px 1px 0;
`
const Check = styled.input`
    appearance:none;
    width:12px;
    height:12px;
    border:1px solid #d8d8d8;
    border-top:1px solid #606060;
    border-left:1px solid #606060;
    background:#fff;
    ${p => p.$focus && css`outline:1px dotted #000; outline-offset:1px;`}
    &:checked::before {
        content:'';
        display:block;
        width:8px;
        height:8px;
        margin:1px;
        background:#000;
        clip-path:polygon(0 30%, 35% 60%, 100% 0, 100% 38%, 35% 100%, 0 68%);
    }
`
const Thumb = styled.div`
    display:flex;
    align-items:center;
    justify-content:center;
    width:356px;
    height:15px;
    margin-left:5px;
    border:1px solid #5f708e;
    background:linear-gradient(#eef1f6, #cdd4e0 50%, #b4bfd1);
`
const ThumbGrip = styled.i`
    width:7px;
    height:7px;
    background:repeating-linear-gradient(90deg, #7c889e 0 1px, transparent 1px 2px);
`
const DialogFooter = styled.footer`
    display:flex;
    align-items:flex-start;
    justify-content:flex-end;
    gap:8px;
    padding-top:8px;
`
const InfoButton = styled.button`
    margin:4px 83px 0 0;
    padding:0;
    border:0;
    background:#d8e0ea;
`
const DialogButton = styled.button`
    ${bevel}
    display:flex;
    flex-direction:column;
    align-items:center;
    width:113px;
    height:49px;
    padding:1px 0 0;
    white-space:nowrap;
    &:disabled {
        border-right-color:#707a88;
        border-bottom-color:#707a88;
        color:#a3a3a3;
    }
`
const DialogIcon = styled.span`
    padding:1px 2px 0;
    background:${p => p.$off ? '#bcd8fd' : 'none'};
`
const Badge = styled.div`
    position:absolute;
    left:${p => p.$x}px;
    top:${p => p.$y}px;
    width:59px;
    height:59px;
    border:2px solid #f2fbf0;
    border-radius:50%;
    background:#4dab38;
    color:#fff;
    font:bold 46px/54px ${segoe};
    text-align:center;
`
const Cursor = styled.svg`
    position:absolute;
    left:392px;
    top:376px;
`
